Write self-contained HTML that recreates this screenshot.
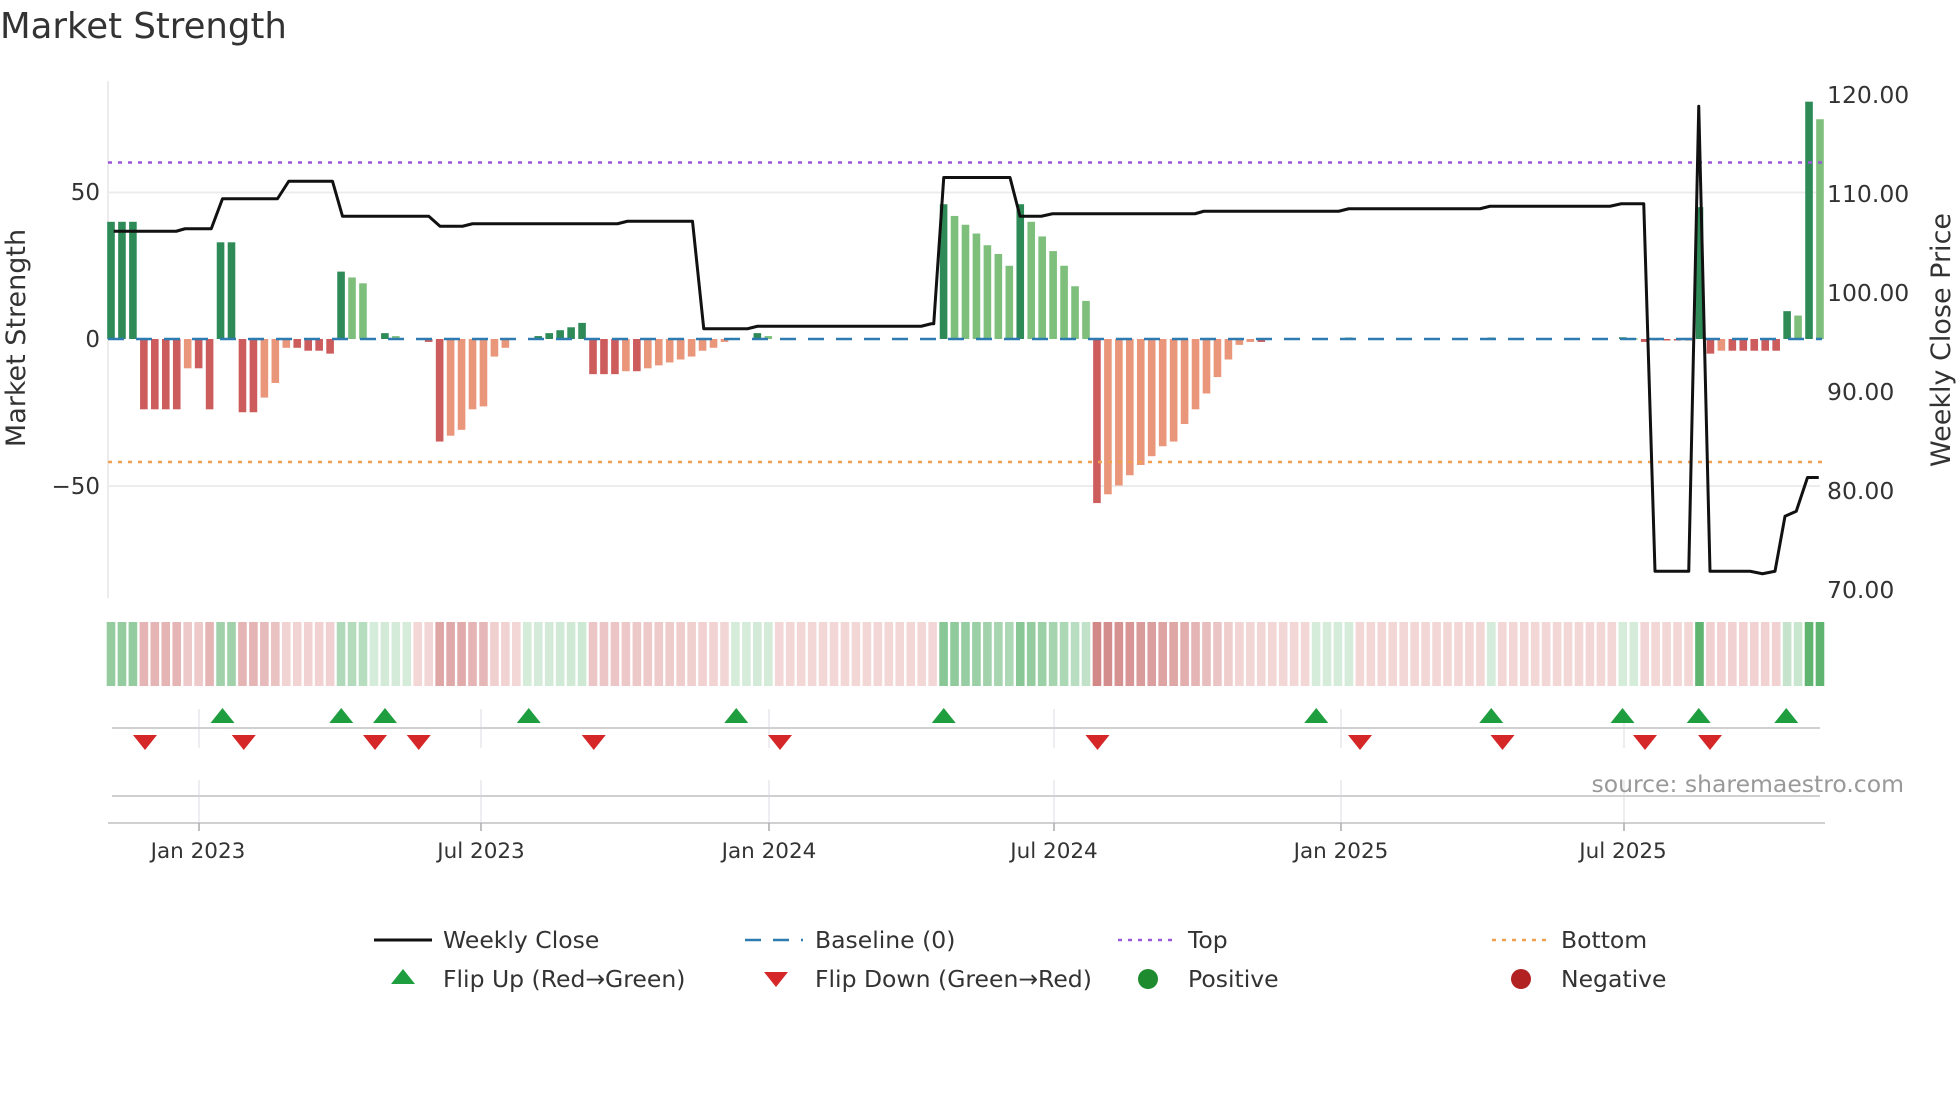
<!DOCTYPE html>
<html><head><meta charset="utf-8"><style>
html,body{margin:0;padding:0;background:#fff;width:1960px;height:1102px;overflow:hidden}
svg{display:block;font-family:"DejaVu Sans","Liberation Sans",sans-serif}
</style></head><body>
<svg id="s" width="1960" height="1102" viewBox="0 0 1960 1102" xmlns="http://www.w3.org/2000/svg">
<text x="0" y="38" font-size="35.5" fill="#333">Market Strength</text>
<line x1="108" y1="81" x2="108" y2="598" stroke="#e6e6e6" stroke-width="1.5"/>
<line x1="108" y1="192.5" x2="1820" y2="192.5" stroke="#ececec" stroke-width="2"/>
<line x1="108" y1="486" x2="1820" y2="486" stroke="#ececec" stroke-width="2"/>
<g font-size="23" fill="#333" text-anchor="end">
<text x="100" y="200">50</text><text x="100" y="347">0</text><text x="100" y="494">−50</text>
</g>
<g font-size="23.5" fill="#333">
<text x="1827" y="103">120.00</text><text x="1827" y="202">110.00</text><text x="1827" y="301">100.00</text><text x="1827" y="400">90.00</text><text x="1827" y="499">80.00</text><text x="1827" y="598">70.00</text>
</g>
<text transform="translate(25,338) rotate(-90)" font-size="27" fill="#333" text-anchor="middle">Market Strength</text>
<text transform="translate(1950,340) rotate(-90)" font-size="27" fill="#333" text-anchor="middle">Weekly Close Price</text>
<g id="bars"></g>
<line x1="108" y1="162.5" x2="1822" y2="162.5" stroke="#9b59d9" stroke-width="2.5" stroke-dasharray="4,6"/>
<line x1="108" y1="462" x2="1822" y2="462" stroke="#f0a050" stroke-width="2.5" stroke-dasharray="4,6"/>
<line x1="108" y1="339" x2="1822" y2="339" stroke="#2d7bb0" stroke-width="2.5" stroke-dasharray="16,12"/>
<polyline id="price" fill="none" stroke="#111" stroke-width="3" stroke-linejoin="round"/>
<g id="heat"></g>
<g stroke="#e8e8ee" stroke-width="1.5">
<line x1="199" y1="709" x2="199" y2="748"/><line x1="481" y1="709" x2="481" y2="748"/><line x1="769" y1="709" x2="769" y2="748"/><line x1="1054" y1="709" x2="1054" y2="748"/><line x1="1341" y1="709" x2="1341" y2="748"/><line x1="1624" y1="709" x2="1624" y2="748"/>
<line x1="199" y1="780" x2="199" y2="822"/><line x1="481" y1="780" x2="481" y2="822"/><line x1="769" y1="780" x2="769" y2="822"/><line x1="1054" y1="780" x2="1054" y2="822"/><line x1="1341" y1="780" x2="1341" y2="822"/><line x1="1624" y1="780" x2="1624" y2="822"/>
</g>
<line x1="112" y1="728" x2="1820" y2="728" stroke="#d0d0d0" stroke-width="2"/>
<line x1="112" y1="796" x2="1820" y2="796" stroke="#d0d0d0" stroke-width="2"/>
<line x1="108" y1="823" x2="1825" y2="823" stroke="#d0d0d0" stroke-width="2"/>
<g id="marks"></g>
<g stroke="#aaa" stroke-width="1.5">
<line x1="199" y1="823" x2="199" y2="831"/><line x1="481" y1="823" x2="481" y2="831"/><line x1="769" y1="823" x2="769" y2="831"/><line x1="1054" y1="823" x2="1054" y2="831"/><line x1="1341" y1="823" x2="1341" y2="831"/><line x1="1624" y1="823" x2="1624" y2="831"/>
</g>
<g font-size="21.5" fill="#333" text-anchor="middle">
<text x="198" y="858">Jan 2023</text><text x="481" y="858">Jul 2023</text><text x="769" y="858">Jan 2024</text><text x="1054" y="858">Jul 2024</text><text x="1341" y="858">Jan 2025</text><text x="1623" y="858">Jul 2025</text>
</g>
<text x="1904" y="792" font-size="23.5" fill="#999" text-anchor="end">source: sharemaestro.com</text>
<g font-size="23.5" fill="#333">
<line x1="374" y1="940" x2="432" y2="940" stroke="#111" stroke-width="3"/>
<text x="443" y="948">Weekly Close</text>
<line x1="745" y1="940" x2="803" y2="940" stroke="#2d7bb0" stroke-width="2.5" stroke-dasharray="16,12"/>
<text x="815" y="948">Baseline (0)</text>
<line x1="1118" y1="940" x2="1176" y2="940" stroke="#9b59d9" stroke-width="2.5" stroke-dasharray="4,6"/>
<text x="1188" y="948">Top</text>
<line x1="1492" y1="940" x2="1550" y2="940" stroke="#f0a050" stroke-width="2.5" stroke-dasharray="4,6"/>
<text x="1561" y="948">Bottom</text>
<polygon points="403,969 391,984 415,984" fill="#1e9e3e"/>
<text x="443" y="987">Flip Up (Red→Green)</text>
<polygon points="764,972 788,972 776,987" fill="#d62728"/>
<text x="815" y="987">Flip Down (Green→Red)</text>
<circle cx="1148" cy="979" r="10" fill="#1e8c2e"/>
<text x="1188" y="987">Positive</text>
<circle cx="1521" cy="979" r="10" fill="#b22222"/>
<text x="1561" y="987">Negative</text>
</g>
</svg>
<script>
var V=new Array(157).fill(0);
function set(i,a){for(var k=0;k<a.length;k++)V[i+k]=a[k];}
set(0,[40,40,40,-24,-24,-24,-24,-10,-10,-24,33,33,-25,-25,-20,-15,-3,-3,-4,-4,-5,23,21,19,0,2,1,0,0,-1,-35,-33,-31,-24,-23,-6,-3,0,0,1,2,3,4,5.5,-12,-12,-12,-11,-11,-10,-9,-8,-7,-6,-4,-3,-1,0,0,2,1]);
set(76,[46,42,39,36,32,29,25,46,40,35,30,25,18,13]);
set(90,[-56,-53,-50,-46.5,-43,-40,-36.6,-35,-29,-24,-18.6,-13,-7,-2,-1,-1,0]);
V[113]=0.5;V[126]=0.5;V[138]=0.6;V[139]=0.3;V[140]=-1;V[141]=-0.5;V[142]=-0.5;V[143]=-0.5;V[144]=-0.5;
set(145,[45,-5,-4,-4,-4,-4,-4,-4,9.5,8,81,75]);
var G={24:1,25:1,26:1,27:1,38:1,57:1,58:1,110:1,111:1,112:1};
var ns="http://www.w3.org/2000/svg",bars=document.getElementById('bars'),heat=document.getElementById('heat');
function el(t,a,p){var e=document.createElementNS(ns,t);for(var k in a)e.setAttribute(k,a[k]);p.appendChild(e);return e;}
function mix(a,b,t){return 'rgb('+a.map(function(v,i){return Math.round(v+(b[i]-v)*t)}).join(',')+')';}
var prevAbs=0,prevV=0;
for(var i=0;i<157;i++){
 var v=V[i],x=111+i*10.955-3.8,a=Math.abs(v);
 var s=v>0?1:(v<0?-1:(G[i]?1:-1));
 if(a>0.05){
  var dark=a>=prevAbs-0.01||(v*prevV<=0);
  var c=v>0?(dark?'#2e8b57':'#7dbf7b'):(dark?'#cd5c5c':'#e9967a');
  var h=a*2.93;
  el('rect',{x:x,y:v>0?339-h:339,width:7.6,height:Math.max(h,1.5),fill:c},bars);
 }
 var t=Math.min(a/57,1);
 var col=s>0?mix([214,236,219],[120,190,135],t):mix([243,215,215],[210,135,135],t);
 if(i==145||i>=155)col='#5fb46f';
 el('rect',{x:x-0.5,y:622,width:8.6,height:64,fill:col},heat);
 prevAbs=a;prevV=v;
}
var P=[[91,185],[141,185],[148,183],[169,183],[178,159],[222,159],[231,145],[266,145],[274,173],[343,173],[352,181],[370,181],[378,179],[494,179],[502,177],[554,177],[563,263],[598,263],[606,261],[737,261],[745,259],[747,259],[755,142],[808,142],[816,173],[833,173],[842,171],[956,171],[963,169],[1071,169],[1079,167],[1184,167],[1192,165],[1288,165],[1297,163],[1315,163],[1324,457],[1351,457],[1359,85],[1368,457],[1400,457],[1410,459],[1420,457],[1428,413],[1437,409],[1446,382],[1455,382]];
document.getElementById('price').setAttribute('points',P.map(function(p){return (p[0]*1.25)+','+(p[1]*1.25)}).join(' '));
var m=document.getElementById('marks');
[178,273,308,423,589,755,1053,1193,1298,1359,1429].forEach(function(vx){var x=vx*1.25;el('polygon',{points:(x)+',708 '+(x-12)+',723 '+(x+12)+',723',fill:'#1e9e3e'},m);});
[116,195,300,335,475,624,878,1088,1202,1316,1368].forEach(function(vx){var x=vx*1.25;el('polygon',{points:(x-12)+',735 '+(x+12)+',735 '+x+',750',fill:'#d62728'},m);});
</script>
</body></html>
